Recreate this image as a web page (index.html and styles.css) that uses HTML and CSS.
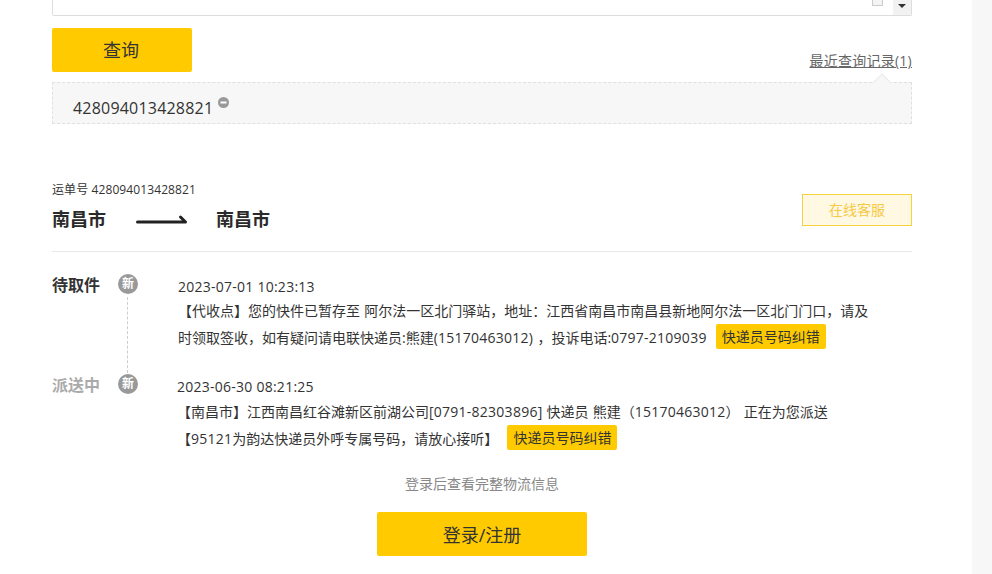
FILE: index.html
```html
<!DOCTYPE html>
<html lang="zh-CN">
<head>
<meta charset="utf-8">
<title>运单查询</title>
<link rel="stylesheet" href="styles.css">
</head>
<body>
<div class="page">
  <main class="main">
    <div class="inputbox">
      <span class="input-icon"></span>
      <span class="input-arrow"><svg width="8" height="4" viewBox="0 0 8 4"><path d="M0 0h8L4 4z" fill="#333"/></svg></span>
    </div>
    <div class="actions">
      <button class="btn btn-query">查询</button>
      <a class="recent">最近查询记录(1)</a>
    </div>
    <div class="history">
      <span class="history-no">428094013428821</span>
      <svg class="history-del" width="11" height="11" viewBox="0 0 11 11"><circle cx="5.5" cy="5.5" r="5.5" fill="#999"/><rect x="2.5" y="4.5" width="6" height="2" fill="#fff"/></svg>
    </div>
    <section class="summary">
      <div class="summary-left">
        <div class="waybill">运单号 428094013428821</div>
        <div class="route">
          <span>南昌市</span>
          <svg class="route-arrow" width="52" height="10" viewBox="0 0 52 10"><path d="M1.5 8H49.5L44.5 3" fill="none" stroke="#222" stroke-width="3" stroke-linecap="round" stroke-linejoin="round"/></svg>
          <span>南昌市</span>
        </div>
      </div>
      <a class="service">在线客服</a>
    </section>
    <section class="timeline">
      <div class="step step-first">
        <div class="status">待取件</div>
        <div class="marker"><span class="dot">新</span><span class="line"></span></div>
        <div class="detail">
          <div class="time">2023-07-01 10:23:13</div>
          <div class="desc">【代收点】您的快件已暂存至 阿尔法一区北门驿站，地址：江西省南昌市南昌县新地阿尔法一区北门门口，请及时领取签收，如有疑问请电联快递员:熊建<span class="num">(15170463012)</span> ，投诉电话:<span class="num">0797-2109039</span> <a class="fix">快递员号码纠错</a></div>
        </div>
      </div>
      <div class="step step-second">
        <div class="status status-muted">派送中</div>
        <div class="marker"><span class="dot">新</span></div>
        <div class="detail">
          <div class="time">2023-06-30 08:21:25</div>
          <div class="desc">【南昌市】江西南昌红谷滩新区前湖公司<span class="num">[0791-82303896]</span> 快递员 熊建（<span class="num">15170463012</span>） 正在为您派送<br>【<span class="num">95121</span>为韵达快递员外呼专属号码，请放心接听】 <a class="fix">快递员号码纠错</a></div>
        </div>
      </div>
    </section>
    <div class="login">
      <p class="login-tip">登录后查看完整物流信息</p>
      <button class="btn btn-login">登录/注册</button>
    </div>
  </main>
  <aside class="rail"></aside>
</div>
</body>
</html>
```
FILE: styles.css
```css
* { box-sizing: border-box; }
html, body { margin: 0; height: 100%; overflow: hidden; background: #fff; }
body { font-family: "Open Sans", "Noto Sans CJK SC", sans-serif; color: #333; font-size: 14px; }
.page { display: flex; height: 574px; }
.main { width: 860px; margin-left: 52px; flex: none; }
.rail { width: 20px; margin-left: 60px; background: #f7f7f7; flex: none; }

.inputbox { height: 16px; border: 1px solid #ddd; border-top: 0; display: flex; justify-content: flex-end; align-items: flex-start; border-radius: 0 0 2px 2px; }
.input-icon { width: 11px; height: 6px; border: 1px solid #ccc; border-top: 0; background: #f4f4f4; margin-right: 10px; }
.input-arrow { width: 18px; height: 15px; background: #f2f2f2; display: flex; justify-content: center; padding-top: 4px; }
.input-arrow svg { display: block; }

.actions { display: flex; justify-content: space-between; align-items: flex-end; margin-top: 12px; }
.btn { border: 0; background: #ffcb00; border-radius: 2px; color: #333; font-family: inherit; padding: 0; }
.btn-query { width: 140px; height: 44px; font-size: 18px; padding-bottom: 2px; padding-right: 2px; }
.recent { font-size: 14px; line-height: 20px; color: #666; text-decoration: underline; margin-bottom: 1px; letter-spacing: .25px; }

.history { position: relative; height: 42px; margin-top: 10px; background: #f7f7f7; border: 1px dashed #e0e0e0; padding: 14px 0 0 20px; display: flex; align-items: flex-start; gap: 5px; }
.history::before { content: ""; position: absolute; right: 21px; top: -8px; width: 15px; height: 15px; background: #f7f7f7; border-left: 1px solid #e6e6e6; border-top: 1px solid #e6e6e6; transform: rotate(45deg) scale(.85); }
.history-no { font-size: 16px; line-height: 22px; color: #333; letter-spacing: .2px; }

.summary { display: flex; justify-content: space-between; align-items: flex-start; height: 72px; margin-top: 56px; border-bottom: 1px solid #e8e8e8; }
.waybill { font-size: 12px; line-height: 18px; margin-top: 1px; color: #333; letter-spacing: .1px; }
.route { display: flex; align-items: center; margin-top: 6px; font-size: 18px; line-height: 28px; font-weight: 700; color: #2a2a2a; }
.route-arrow { margin: 0 28px 0 30px; }
.service { width: 110px; height: 32px; margin-top: 14px; border: 1px solid #f5d33f; background: #fff8e3; color: #f6c945; font-size: 14px; line-height: 30px; text-align: center; }

.timeline { margin-top: 22px; }
.step { display: flex; align-items: flex-start; }
.step-first { height: 100px; }
.step-second { height: 98px; }
.status { width: 66px; font-size: 16px; line-height: 22px; font-weight: 700; color: #333; }
.status-muted { color: #aaa; }
.marker { width: 60px; display: flex; flex-direction: column; align-items: flex-start; height: 100%; }
.dot { width: 20px; height: 20px; border-radius: 50%; background: #999; color: #fff; font-size: 12px; line-height: 20px; text-align: center; font-weight: 700; }
.line { height: 76px; margin-left: 9px; margin-top: 3px; border-left: 1px dashed #ccc; }
.detail { width: 692px; }
.step-second .detail { margin-left: -1px; }
.time { font-size: 14px; line-height: 24px; margin-top: 1px; color: #333; letter-spacing: .25px; }
.desc { font-size: 14px; line-height: 26px; margin-top: -1px; word-spacing: .5px; color: #333; }
.step-second .desc { margin-top: 0; }
.num { letter-spacing: .25px; }
.fix { display: inline-block; vertical-align: 1px; height: 25px; margin-left: 5px; padding: 0 6px; background: #ffcb00; border-radius: 2px; line-height: 25px; font-size: 14px; color: #333; }

.login { text-align: center; margin-top: 2px; }
.login-tip { margin: 0; font-size: 14px; line-height: 20px; color: #888; }
.btn-login { display: block; width: 210px; height: 44px; margin: 18px auto 0; font-size: 18px; }
```
